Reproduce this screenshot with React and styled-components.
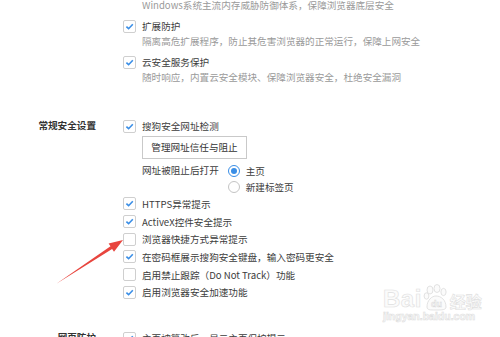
import React from "react";
import styled, { createGlobalStyle } from "styled-components";

const GlobalStyle = createGlobalStyle`
    html, body {
        margin: 0;
        padding: 0;
        background: #fff;
    }
    body {
        font-family: "Noto Sans CJK SC", "Noto Sans", sans-serif;
        font-size: 9.6px;
        color: #3c3c3c;
    }
`;

const Page = styled.div`
    position: relative;
    width: 500px;
    height: 337px;
    overflow: hidden;
    background: #fff;
`;

// content is scrolled a few px, the first line sits at the top edge
const Scroll = styled.div`
    margin-top: -2.5px;
`;

const Section = styled.div`
    display: grid;
    grid-template-columns: 96px 1fr;
    column-gap: 27px;
    margin-top: ${({ top }) => top || 0}px;
`;

const SectionLabel = styled.div`
    text-align: right;
    font-weight: bold;
    color: #333;
    line-height: 17.7px;
    white-space: nowrap;
`;

const Options = styled.div`
    display: flex;
    flex-direction: column;
`;

const Item = styled.div`
    display: flex;
    flex-direction: column;
    margin-bottom: 6px;
`;

const Row = styled.div`
    display: flex;
    align-items: center;
    gap: 6px;
    height: ${({ h }) => h || 17.7}px;
    white-space: nowrap;
    color: #3c3c3c;
`;

const Desc = styled.div`
    padding-left: 19px;
    line-height: 15px;
    height: 15px;
    color: #9a9a9a;
    white-space: nowrap;
`;

const Box = styled.span`
    flex: none;
    width: 13px;
    height: 13px;
    box-sizing: border-box;
    border: 1px solid #cfcfcf;
    border-radius: 2px;
    background: #fff;
    display: flex;
    align-items: center;
    justify-content: center;
`;

const Button = styled.div`
    margin: 1px 0 0 19px;
    width: 105px;
    height: 23px;
    box-sizing: border-box;
    border: 1px solid #c9c9c9;
    background: #fff;
    color: #333;
    display: flex;
    align-items: center;
    justify-content: center;
    white-space: nowrap;
`;

const OpenRow = styled.div`
    display: flex;
    align-items: flex-start;
    gap: 9px;
    margin: 3.6px 0 0 19px;
`;

const OpenLabel = styled.span`
    line-height: 16.3px;
    color: #3c3c3c;
    white-space: nowrap;
`;

const RadioList = styled.div`
    display: flex;
    flex-direction: column;
`;

const Radio = styled.span`
    flex: none;
    width: 12px;
    height: 12px;
    box-sizing: border-box;
    border-radius: 50%;
    border: 1px solid ${({ on }) => (on ? "#3a8ee6" : "#c4c4c4")};
    background: #fff;
    display: flex;
    align-items: center;
    justify-content: center;

    &::after {
        content: "";
        width: 6px;
        height: 6px;
        border-radius: 50%;
        background: ${({ on }) => (on ? "#3a8ee6" : "transparent")};
    }
`;

const Overlay = styled.svg`
    position: absolute;
    left: 0;
    top: 0;
    pointer-events: none;
`;

const Watermark = styled.div`
    position: absolute;
    left: 383px;
    top: 283px;
    display: flex;
    flex-direction: column;
    align-items: flex-start;
    pointer-events: none;
    opacity: 0.9;
`;

const MarkTop = styled.div`
    display: flex;
    align-items: flex-end;
    gap: 1px;
    height: 28px;
`;

const MarkText = styled.span`
    font-family: "Liberation Sans", "Noto Sans CJK SC", sans-serif;
    font-weight: bold;
    font-size: ${({ size }) => size}px;
    line-height: 1;
    color: #fbfbfb;
    -webkit-text-stroke: 0.6px #dcdcdc;
    letter-spacing: ${({ ls }) => ls || 0}px;
`;

const Check = ({ on }) => (
    <Box>
        {on && (
            <svg width="11" height="11" viewBox="0 0 11 11">
                <polyline
                    points="2.4,5.6 4.6,7.7 8.8,3.2"
                    fill="none"
                    stroke="#3a8ee6"
                    strokeWidth="1.6"
                />
            </svg>
        )}
    </Box>
);

const CheckRow = ({ on, children, h }) => (
    <Row h={h}>
        <Check on={on} />
        <span>{children}</span>
    </Row>
);

const Paw = () => (
    <svg width="26" height="27" viewBox="0 0 26 27">
        <g fill="#fbfbfb" stroke="#d8d8d8" strokeWidth="0.8">
            <ellipse cx="7" cy="6" rx="3" ry="4" />
            <ellipse cx="14" cy="4.5" rx="3" ry="4" />
            <ellipse cx="20.5" cy="8" rx="2.6" ry="3.6" />
            <ellipse cx="3.5" cy="12" rx="2.4" ry="3.2" />
            <path d="M4 23 C4 16 9 12 13 12 C18 12 23 16 23 23 C23 26 19 26 13 26 C7 26 4 26 4 23 Z" />
        </g>
        <text
            x="13.5"
            y="23"
            textAnchor="middle"
            fontFamily="Liberation Sans, sans-serif"
            fontWeight="bold"
            fontSize="9"
            fill="#fbfbfb"
            stroke="#d4d4d4"
            strokeWidth="0.5"
        >
            du
        </text>
    </svg>
);

export default function App() {
    const tips = [
        { on: true, text: "HTTPS异常提示" },
        { on: true, text: "ActiveX控件安全提示" },
        { on: false, text: "浏览器快捷方式异常提示" },
        { on: true, text: "在密码框展示搜狗安全键盘，输入密码更安全" },
        { on: false, text: "启用禁止跟踪（Do Not Track）功能" },
        { on: true, text: "启用浏览器安全加速功能" }
    ];

    return (
        <Page>
            <GlobalStyle />
            <Scroll>
                <Section>
                    <SectionLabel />
                    <Options>
                        <Item>
                            <Desc>Windows系统主流内存威胁防御体系，保障浏览器底层安全</Desc>
                        </Item>
                        <Item>
                            <CheckRow on h={15}>扩展防护</CheckRow>
                            <Desc>隔离高危扩展程序，防止其危害浏览器的正常运行，保障上网安全</Desc>
                        </Item>
                        <Item>
                            <CheckRow on h={15}>云安全服务保护</CheckRow>
                            <Desc>随时响应，内置云安全模块、保障浏览器安全，杜绝安全漏洞</Desc>
                        </Item>
                    </Options>
                </Section>

                <Section top={26.7}>
                    <SectionLabel>常规安全设置</SectionLabel>
                    <Options>
                        <CheckRow on>搜狗安全网址检测</CheckRow>
                        <Button>管理网址信任与阻止</Button>
                        <OpenRow>
                            <OpenLabel>网址被阻止后打开</OpenLabel>
                            <RadioList>
                                <Row h={16.3}>
                                    <Radio on />
                                    <span>主页</span>
                                </Row>
                                <Row h={16.3}>
                                    <Radio />
                                    <span>新建标签页</span>
                                </Row>
                            </RadioList>
                        </OpenRow>
                        {tips.map(t => (
                            <CheckRow key={t.text} on={t.on}>
                                {t.text}
                            </CheckRow>
                        ))}
                    </Options>
                </Section>

                <Section top={28}>
                    <SectionLabel>网页防护</SectionLabel>
                    <Options>
                        <CheckRow on>主页被篡改后，显示主页保护提示</CheckRow>
                    </Options>
                </Section>
            </Scroll>

            <Watermark>
                <MarkTop>
                    <MarkText size={24} ls={0.5}>Bai</MarkText>
                    <Paw />
                    <MarkText size={16}>经验</MarkText>
                </MarkTop>
                <MarkText size={10.5}>jingyan.baidu.com</MarkText>
            </Watermark>

            <Overlay width="500" height="337" viewBox="0 0 500 337">
                <polygon
                    points="56,284 112.1,248.9 114,251.8 123,240 108.6,243.4 110.5,246.3"
                    fill="#e8453e"
                />
            </Overlay>
        </Page>
    );
}
